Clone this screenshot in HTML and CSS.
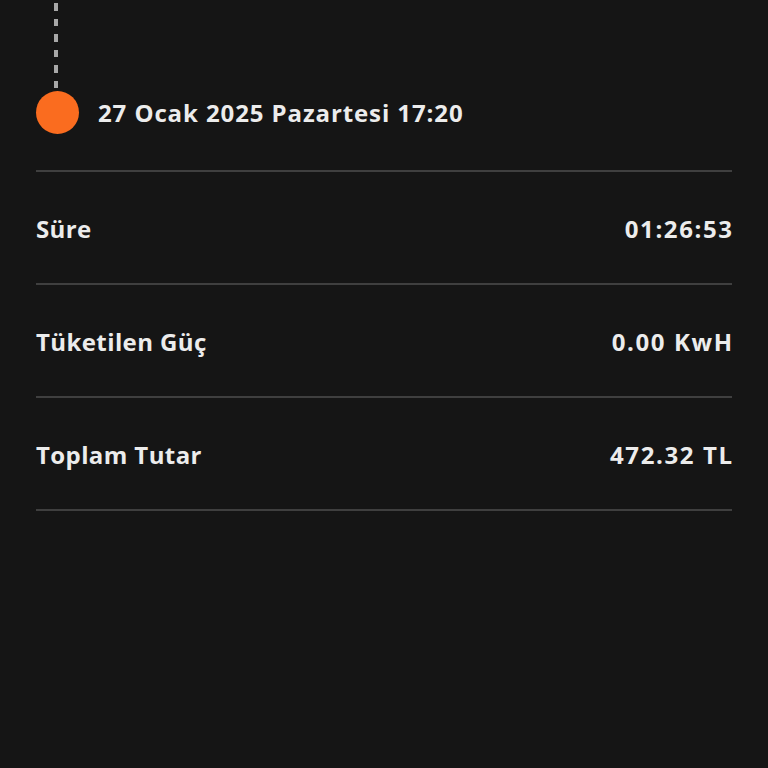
FILE: index.html
```html
<!DOCTYPE html>
<html lang="tr">
<head>
<meta charset="utf-8">
<link rel="stylesheet" href="styles.css">
</head>
<body>
<div class="page">
  <div class="rail"></div>
  <div class="event">
    <span class="dot"></span>
    <span class="event-date">27 Ocak 2025 Pazartesi 17:20</span>
  </div>
  <div class="row">
    <span class="label">Süre</span>
    <span class="value">01:26:53</span>
  </div>
  <div class="row">
    <span class="label">Tüketilen Güç</span>
    <span class="value">0.00 KwH</span>
  </div>
  <div class="row">
    <span class="label">Toplam Tutar</span>
    <span class="value">472.32 TL</span>
  </div>
</div>
</body>
</html>
```

FILE: styles.css
```css
html, body {
  margin: 0;
  padding: 0;
  background: #151515;
  height: 100%;
}
.page {
  padding: 0 36px;
  font-family: "Open Sans", Lato, sans-serif;
  font-weight: 700;
  color: #ececec;
}
.rail {
  margin-left: 18px;
  width: 4px;
  height: 88px;
  background: repeating-linear-gradient(to bottom, transparent 0, transparent 3px, #a8a8a8 3px, #a8a8a8 10.5px, transparent 10.5px, transparent 15.5px);
}
.event {
  display: flex;
  align-items: flex-start;
  gap: 19px;
  height: 82px;
  border-bottom: 2px solid #3f3f3f;
}
.dot {
  margin-top: 3px;
  width: 43px;
  height: 43px;
  border-radius: 50%;
  background: #fa6c1f;
  flex: none;
}
.event-date {
  font-size: 24px;
  line-height: 43px;
  margin-top: 3px;
  letter-spacing: 0.9px;
}
.row {
  display: flex;
  justify-content: space-between;
  align-items: center;
  box-sizing: content-box;
  height: 110px;
  padding-top: 1px;
  border-bottom: 2px solid #3f3f3f;
  font-size: 24px;
}
.label {
  letter-spacing: 0.4px;
}
.value {
  letter-spacing: 1.6px;
  margin-right: -1.6px;
}
```
